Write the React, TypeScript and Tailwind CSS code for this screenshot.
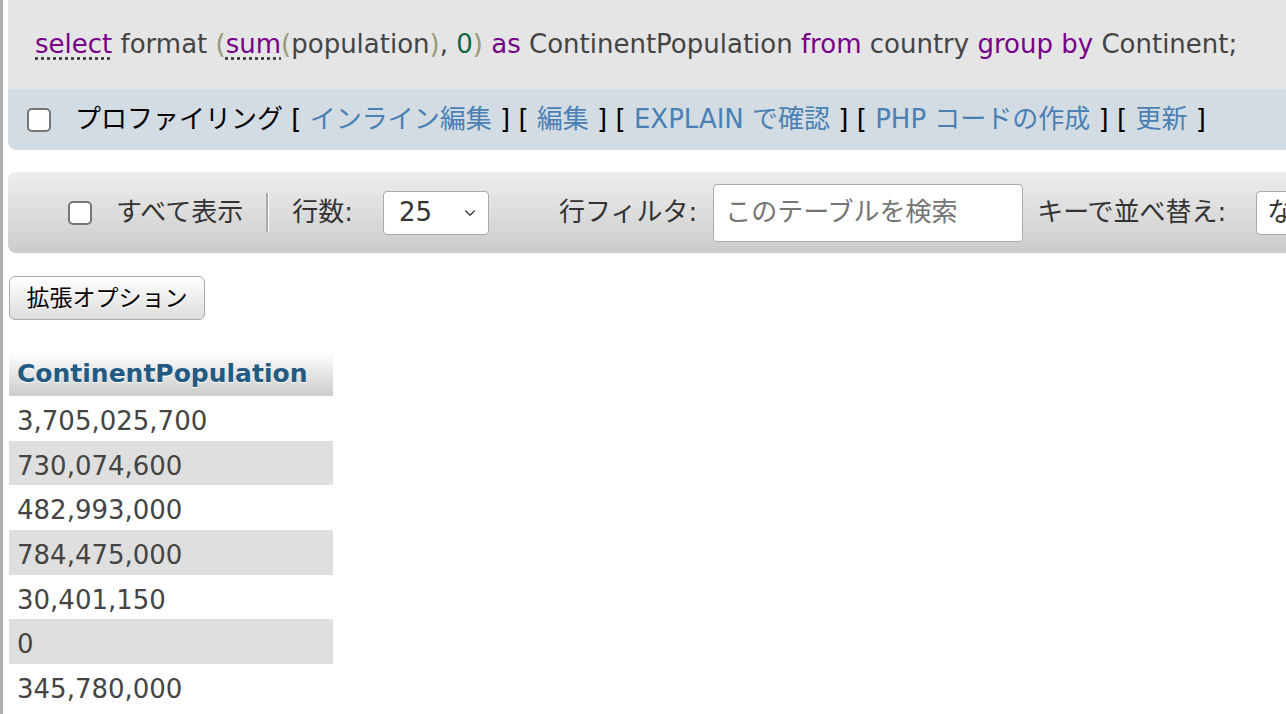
import { ChevronDown } from "lucide-react";

const rows = [
    "3,705,025,700",
    "730,074,600",
    "482,993,000",
    "784,475,000",
    "30,401,150",
    "0",
    "345,780,000",
];

function Box() {
    return <span className="inline-block w-[24px] h-[24px] rounded-[5px] border-2 border-[#767676] bg-white shrink-0" />;
}

export default function App() {
    return (
        <div
            className="w-[1286px] h-[714px] overflow-hidden bg-white border-l-[3px] border-[#b0b0b0] pl-[5px] text-[#333]"
            style={{ fontFamily: '"DejaVu Sans", "Noto Sans CJK JP", sans-serif' }}
        >
            <div className="w-[1400px]">
                {/* sql box */}
                <div className="h-[89px] bg-[#e5e5e5] pl-[27px] flex items-center text-[26px] text-[#444]">
                    <span className="text-[#770088] underline decoration-dotted decoration-[#333] underline-offset-4">select</span>
                    <span>&nbsp;format&nbsp;</span>
                    <span className="text-[#999977]">(</span>
                    <span className="text-[#770088] underline decoration-dotted decoration-[#333] underline-offset-4">sum</span>
                    <span className="text-[#999977]">(</span>
                    <span>population</span>
                    <span className="text-[#999977]">)</span>
                    <span>,&nbsp;</span>
                    <span className="text-[#116644]">0</span>
                    <span className="text-[#999977]">)</span>
                    <span className="text-[#770088]">&nbsp;as&nbsp;</span>
                    <span>ContinentPopulation</span>
                    <span className="text-[#770088]">&nbsp;from&nbsp;</span>
                    <span>country</span>
                    <span className="text-[#770088]">&nbsp;group by&nbsp;</span>
                    <span>Continent;</span>
                </div>

                {/* profiling bar */}
                <div className="h-[61px] bg-[#d3dce3] rounded-bl-[8px] pl-[19px] flex items-center gap-[24px] text-[26px] text-black">
                    <Box />
                    <div className="whitespace-nowrap">
                        プロファイリング [ <span className="text-[#4a80b3]">インライン編集</span> ] [{" "}
                        <span className="text-[#4a80b3]">編集</span> ] [{" "}
                        <span className="text-[#4a80b3]">EXPLAIN で確認</span> ] [{" "}
                        <span className="text-[#4a80b3]">PHP コードの作成</span> ] [{" "}
                        <span className="text-[#4a80b3]">更新</span> ]
                    </div>
                </div>

                {/* navigation */}
                <div className="mt-[22px] h-[81px] rounded-l-[8px] bg-gradient-to-b from-[#eeeeee] to-[#cccccc] flex items-center text-[26px] text-[#333] whitespace-nowrap">
                    <div className="ml-[60px] flex">
                        <Box />
                    </div>
                    <span className="ml-[24px]">すべて表示</span>
                    <span className="ml-[23px] w-[3px] h-[39px] bg-[#aaaaaa] border-r border-white" />
                    <span className="ml-[23px]">行数:</span>
                    <div className="ml-[30px] w-[106px] h-[44px] bg-white border border-[#aaaaaa] rounded-[4px] flex items-center justify-between pl-[15px] pr-[9px]">
                        <span>25</span>
                        <ChevronDown size={18} strokeWidth={1.5} className="text-[#333]" />
                    </div>
                    <span className="ml-[70px]">行フィルタ:</span>
                    <div className="ml-[16px] w-[310px] h-[58px] bg-white border border-[#aaaaaa] rounded-[4px] flex items-center pl-[11px] text-[#757575]">
                        このテーブルを検索
                    </div>
                    <span className="ml-[14px]">キーで並べ替え:</span>
                    <div className="ml-[30px] w-[120px] h-[44px] bg-white border border-[#aaaaaa] rounded-[4px] flex items-center pl-[10px]">
                        なし
                    </div>
                </div>

                {/* options button */}
                <div className="mt-[23px] ml-[1px] w-[196px] h-[44px] rounded-[6px] border border-[#aaaaaa] bg-gradient-to-b from-white to-[#dddddd] flex items-center justify-center text-[23px] text-black [text-shadow:0_1px_0_#fff]">
                    拡張オプション
                </div>

                {/* results */}
                <table className="mt-[32px] ml-[1px] w-[324px] border-collapse text-[26px]">
                    <thead>
                        <tr>
                            <th className="h-[44px] text-left pl-[8px] text-[25px] font-bold text-[#235a81] bg-gradient-to-b from-white to-[#cccccc] [text-shadow:0_1px_0_#fff]">
                                ContinentPopulation
                            </th>
                        </tr>
                    </thead>
                    <tbody>
                        {rows.map((r, i) => (
                            <tr key={i} className={i % 2 === 1 ? "bg-[#dfdfdf]" : "bg-white"}>
                                <td className="h-[44.7px] pl-[8px] pt-[5px] text-[#444] leading-none">{r}</td>
                            </tr>
                        ))}
                    </tbody>
                </table>
            </div>
        </div>
    );
}
